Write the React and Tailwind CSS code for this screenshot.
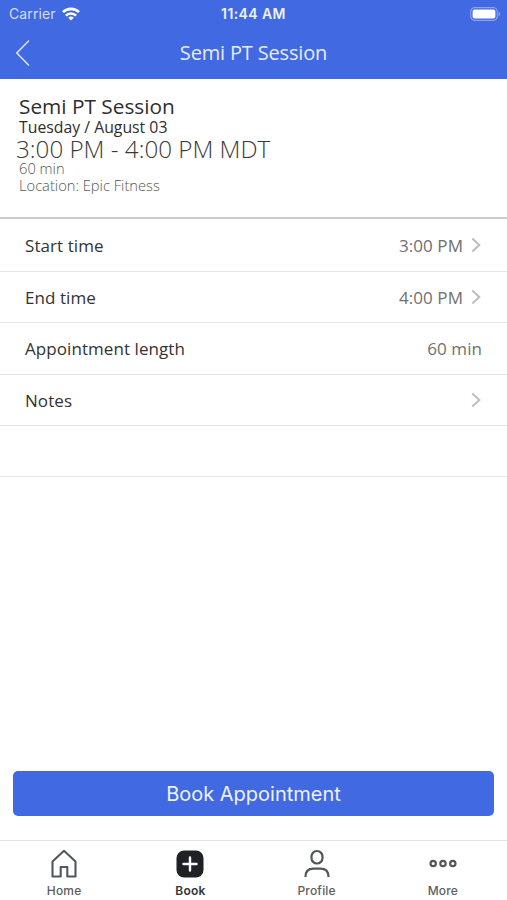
import React from 'react';

const rows = [
  { label: "Start time", value: "3:00 PM", arrow: true, h: "h-[53px]" },
  { label: "End time", value: "4:00 PM", arrow: true, h: "h-[51px]" },
  { label: "Appointment length", value: "60 min", arrow: false, h: "h-[52px]" },
  { label: "Notes", value: "", arrow: true, h: "h-[51px]" },
  { label: "", value: "", arrow: false, h: "h-[51px]" },
];

function StatusBar() {
  return (
    <div className="grid grid-cols-3 items-center h-[27px] pl-[9px] pr-[6px] font-['Inter',sans-serif]">
      <div className="flex items-center gap-[6px]">
        <span className="text-[14px] leading-[16px] tracking-[0.1px] text-[#d5defa]">Carrier</span>
        <svg width="18" height="14" viewBox="0 0 18 14" fill="none" stroke="#fff" strokeWidth="2.6">
          <path d="M1 5.2a11.3 11.3 0 0 1 16 0" />
          <path d="M3.9 8.6a7.2 7.2 0 0 1 10.2 0" />
          <path d="M9 13.6 6.2 10.8a4 4 0 0 1 5.6 0z" fill="#fff" stroke="none" />
        </svg>
      </div>
      <div className="pr-[3px] text-center text-[14px] leading-[16px] font-semibold tracking-[0.4px] text-[#eef2fe]">11:44 AM</div>
      <div className="flex justify-end">
        <svg width="31" height="14" viewBox="0 0 31 14">
          <rect x="0.7" y="0.7" width="26.6" height="12.6" rx="4" fill="none" stroke="#8ba3ef" strokeWidth="1.2" />
          <rect x="2.6" y="2.6" width="22.8" height="8.8" rx="2" fill="#fff" />
          <path d="M28.8 4.8v4.4c1.6-.7 1.6-3.7 0-4.4z" fill="#a9bbf4" />
        </svg>
      </div>
    </div>
  );
}

function Chevron() {
  return (
    <svg className="mr-px mb-[2px]" width="10" height="16" viewBox="0 0 10 16" fill="none" stroke="#bdbdbd" strokeWidth="2">
      <path d="M1.3 1.4 8.3 8l-7 6.600" />
    </svg>
  );
}

function Tab({ label, bold, children }) {
  return (
    <div className="flex flex-col items-center pt-[8px]">
      <div className="flex items-center justify-center h-[30px]">{children}</div>
      <div className={bold
        ? "text-[12px] leading-[16px] mt-[4px] font-semibold tracking-[0.2px] text-[#333537]"
        : "text-[12px] leading-[16px] mt-[4px] font-medium tracking-[0.2px] text-[#5c5e60]"}
      >
        {label}
      </div>
    </div>
  );
}

export default function App() {
  return (
    <div className="flex flex-col w-[507px] h-[900px] overflow-hidden bg-white font-['Open_Sans',sans-serif]">
      <header className="h-[79px] shrink-0 bg-[#4169e1]">
        <StatusBar />
        <div className="grid grid-cols-[60px_1fr_60px] items-center h-[51px]">
          <svg className="ml-[15px]" width="16" height="28" viewBox="0 0 16 28" fill="none" stroke="#dfe6fb" strokeWidth="1.5">
            <path d="M14 1.5 1.8 14 14 26.5" />
          </svg>
          <h1 className="text-center text-[20px] leading-[26px] tracking-[-0.17px] text-[#e7ecfc]">Semi PT Session</h1>
        </div>
      </header>

      {/* appointment summary */}
      <section className="h-[140px] shrink-0 pt-[14px] pl-[19px] border-b-2 border-[#cbcccf] whitespace-nowrap">
        <h2 className="text-[20.8px] leading-[26px] text-[#2e2e2e]">Semi PT Session</h2>
        <p className="text-[15.8px] leading-[16px] text-[#2e2e2e]">Tuesday / August 03</p>
        <p className="-ml-[3px] text-[24.2px] leading-[28px] font-light text-[#3a3a3a]">3:00 PM - 4:00 PM MDT</p>
        <p className="text-[14.7px] leading-[10px] font-light text-[#555]">60 min</p>
        <p className="mt-[1px] text-[14.7px] leading-[22px] font-light text-[#555]">Location: Epic Fitness</p>
      </section>

      <ul>
        {rows.map((row, i) => (
          <li key={i} className={"flex items-center justify-between pl-[25px] pr-[25px] pt-px border-b border-[#e6e6e6] " + row.h}>
            <span className="text-[17px] leading-[22px] tracking-[0.07px] text-[#333]">{row.label}</span>
            <div className="flex items-center gap-[8px] text-[#707070]">
              <span className="text-[17px] leading-[22px] tracking-[0.07px]">{row.value}</span>
              {row.arrow && <Chevron />}
            </div>
          </li>
        ))}
      </ul>

      <div className="mt-auto px-[13px] pb-[24px]">
        <button className="block w-full h-[45px] rounded-[5px] bg-[#4169e1] font-['Inter',sans-serif] text-[20px] text-[#eef2fe]">
          Book Appointment
        </button>
      </div>

      <nav className="grid grid-cols-4 h-[60px] shrink-0 px-px border-t border-[#e3e3e3] font-['Inter',sans-serif]">
        <Tab label="Home">
          <svg width="28" height="30" viewBox="0 0 28 30" fill="none" stroke="#54575a" strokeWidth="2.1" strokeLinejoin="round">
            <path d="M2.500 12.500 14 1.800l11.500 10.700V27.500h-8.200v-9.500h-6.600v9.500H2.500z" />
          </svg>
        </Tab>
        <Tab label="Book" bold>
          <svg width="28" height="28" viewBox="0 0 28 28">
            <rect x="0.500" y="0.500" width="27" height="27" rx="7.500" fill="#1f2124" />
            <path d="M14 7.500v13M7.500 14h13" stroke="#fff" strokeWidth="2.400" strokeLinecap="round" />
          </svg>
        </Tab>
        <Tab label="Profile">
          <svg width="28" height="30" viewBox="0 0 28 30" fill="none" stroke="#54575a" strokeWidth="2.200">
            <rect x="8.500" y="2" width="11" height="12.500" rx="5.500" />
            <path d="M2.500 28c0-5.500 3-8.300 8-8.300h7c5 0 8 2.800 8 8.300" />
          </svg>
        </Tab>
        <Tab label="More">
          <svg width="28" height="28" viewBox="0 0 28 28" fill="none" stroke="#54575a" strokeWidth="2.200">
            <circle cx="4.200" cy="13.500" r="2.700" />
            <circle cx="14" cy="13.500" r="2.700" />
            <circle cx="23.800" cy="13.500" r="2.700" />
          </svg>
        </Tab>
      </nav>
    </div>
  );
}
